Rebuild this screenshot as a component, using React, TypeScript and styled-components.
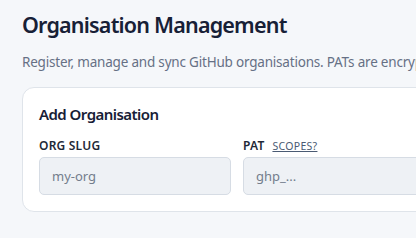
import React from 'react';
import styled, { createGlobalStyle } from 'styled-components';

const Global = createGlobalStyle`
    html, body {
        margin: 0;
        padding: 0;
        background: #f5f7fa;
        overflow: hidden;
    }
    body {
        font-family: "Noto Sans", "Open Sans", sans-serif;
        color: #1a202c;
    }
`;

const Page = styled.div`
    padding: 10px 0 0 22px;
    width: 700px;
`;

const Title = styled.h1`
    margin: 0;
    font-size: 21.5px;
    line-height: 30px;
    font-weight: 650;
    letter-spacing: -0.8px;
    color: #172036;
`;

const Subtitle = styled.p`
    margin: 12px 0 0;
    font-size: 13.5px;
    line-height: 20px;
    letter-spacing: -0.2px;
    color: #667085;
    white-space: nowrap;
`;

const Card = styled.section`
    margin-top: 15px;
    background: #ffffff;
    border: 1px solid #dfe4ea;
    border-radius: 12px;
    padding: 15px 16px 16px;
`;

const CardTitle = styled.h2`
    margin: 0;
    font-size: 15px;
    line-height: 22px;
    font-weight: 600;
    letter-spacing: -0.55px;
    color: #172036;
`;

const Fields = styled.div`
    margin-top: 13px;
    display: grid;
    grid-template-columns: 192px 192px 192px;
    column-gap: 12px;
`;

const Field = styled.div`
    display: flex;
    flex-direction: column;
    gap: 3px;
`;

const LabelRow = styled.div`
    display: flex;
    align-items: baseline;
    gap: 8px;
    height: 16px;
`;

const Label = styled.label`
    font-size: 12px;
    line-height: 16px;
    font-weight: 600;
    text-transform: uppercase;
    letter-spacing: 0.2px;
    color: #1f2937;
`;

const HelpLink = styled.a`
    font-size: 10.5px;
    line-height: 16px;
    letter-spacing: 0.3px;
    color: #4a5a73;
    text-decoration: underline;
    text-transform: uppercase;
    cursor: pointer;
`;

const Input = styled.input`
    box-sizing: border-box;
    height: 38px;
    width: 100%;
    padding: 0 12px;
    font-family: inherit;
    font-size: 13px;
    background: #eef1f5;
    border: 1px solid #d6dce4;
    border-radius: 5px;
    color: #1a2233;
    outline: none;
    &::placeholder {
        color: #737d8c;
    }
`;

export default function App() {
    return (
        <>
            <Global />
            <Page>
                <Title>Organisation Management</Title>
                <Subtitle>Register, manage and sync GitHub organisations. PATs are encrypted at rest.</Subtitle>
                <Card>
                    <CardTitle>Add Organisation</CardTitle>
                    <Fields>
                        <Field>
                            <LabelRow><Label>Org slug</Label></LabelRow>
                            <Input placeholder="my-org" />
                        </Field>
                        <Field>
                            <LabelRow>
                                <Label>PAT</Label>
                                <HelpLink>Scopes?</HelpLink>
                            </LabelRow>
                            <Input placeholder="ghp_..." />
                        </Field>
                    </Fields>
                </Card>
            </Page>
        </>
    );
}
